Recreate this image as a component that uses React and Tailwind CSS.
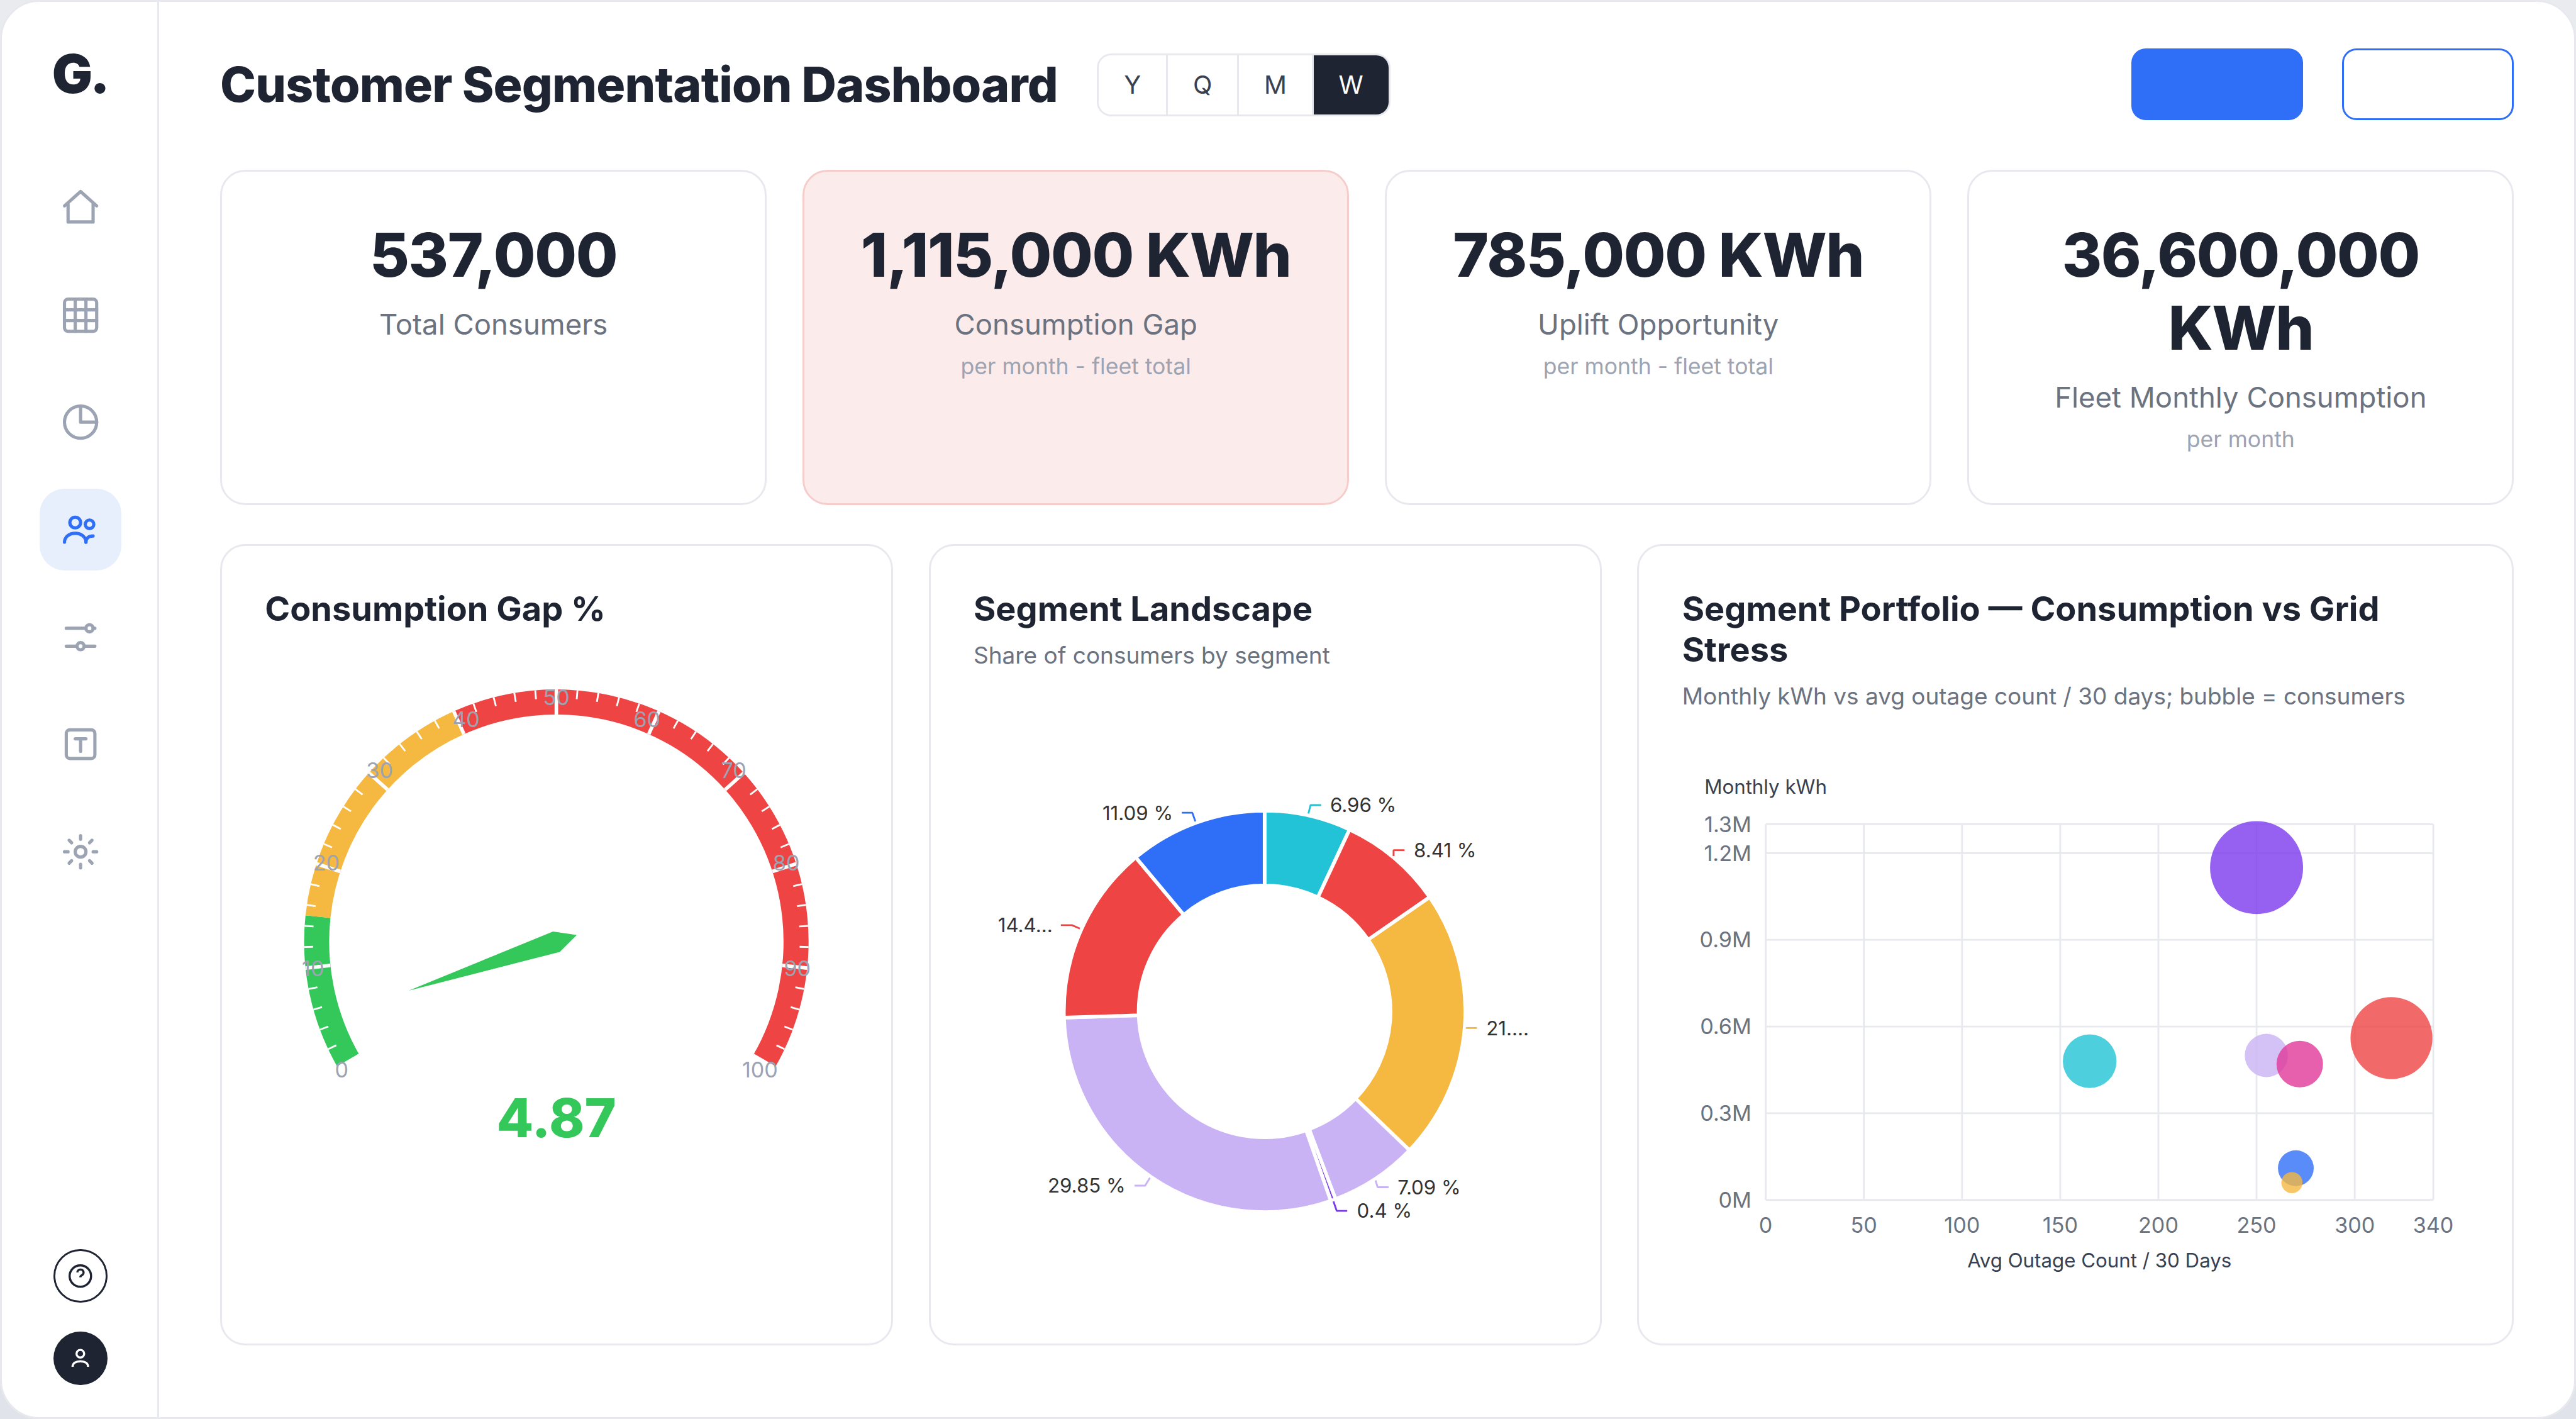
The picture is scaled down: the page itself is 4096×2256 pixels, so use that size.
const navItems = [
  { id: 'home', paths: ['M3 11l9-8 9 8', 'M5 10v10h14V10'] },
  { id: 'grid', rect: 3, paths: ['M3 9h18M3 15h18M9 3v18M15 3v18'] },
  { id: 'reports', circles: [[12, 12, 9]], paths: ['M12 3v9h9'] },
  {
    id: 'segments',
    active: true,
    circles: [[9, 8, 3], [17, 9, 2.4]],
    paths: ['M3 19c0-3 2.7-5 6-5s6 2 6 5', 'M15 19c0-2.2 1.5-3.5 4-3.5'],
  },
  { id: 'filters', circles: [[17, 7, 2], [12, 17, 2]], paths: ['M4 7h11M19 7h1M4 17h6M14 17h6'] },
  { id: 'text', rect: 4, paths: ['M9 9h6M12 9v7'] },
  {
    id: 'settings',
    circles: [[12, 12, 3]],
    paths: ['M12 3v2M12 19v2M3 12h2M19 12h2M5.6 5.6L7 7M17 17l1.4 1.4M18.4 5.6L17 7M7 17l-1.4 1.4'],
  },
];

const kpis = [
  { value: '537,000', label: 'Total Consumers' },
  { value: '1,115,000 KWh', label: 'Consumption Gap', note: 'per month - fleet total', alert: true },
  { value: '785,000 KWh', label: 'Uplift Opportunity', note: 'per month - fleet total' },
  { value: '36,600,000 KWh', label: 'Fleet Monthly Consumption', note: 'per month' },
];

const segments = [
  { pct: 6.96, color: '#22c3d6', label: '6.96 %', x: 199.3, y: 70.3, line: '187.2,75 188.4,70.3 194.3,70.3' },
  { pct: 8.41, color: '#ef4444', label: '8.41 %', x: 246.1, y: 95.5, line: '234.8,98.8 234.8,95.5 240.9,95.5' },
  { pct: 21.79, color: '#f5b841', label: '21....', x: 286.6, y: 195, line: '275.2,194.9 281.4,194.9' },
  { pct: 7.09, color: '#c9b3f5', label: '7.09 %', x: 237, y: 283.9, line: '224.7,280.1 225.9,283.9 232,283.9' },
  { pct: 0.4, color: '#7c3aed', label: '0.4 %', x: 214.3, y: 297.1, line: '201.2,291.8 203,297.1 208.9,297.1' },
  { pct: 29.85, color: '#c9b3f5', label: '29.85 %', x: 85, y: 283, end: true, line: '90,283 95.9,283 98.6,278.6' },
  { pct: 14.41, color: '#ef4444', label: '14.4...', x: 44.2, y: 137.5, end: true, line: '48.8,137.4 55,137.4 59.4,139.3' },
  { pct: 11.09, color: '#2f6ef7', label: '11.09 %', x: 111.5, y: 74.7, end: true, line: '116.4,74.6 122.3,74.6 124,79.4' },
];

const bubbles = [
  { x: 250, y: 1.15, r: 26, color: '#7c3aed' },
  { x: 318.7, y: 0.56, r: 22.9, color: '#ef4444' },
  { x: 165, y: 0.48, r: 15, color: '#22c3d6' },
  { x: 255, y: 0.5, r: 12.1, color: '#c9b3f5' },
  { x: 272, y: 0.47, r: 13, color: '#e0389a' },
  { x: 270, y: 0.11, r: 10, color: '#2f6ef7' },
  { x: 268, y: 0.06, r: 5.9, color: '#f5b841' },
];

// Point on a circle, angle in degrees counter-clockwise from 3 o'clock
const polar = (cx, cy, r, deg) => {
  const rad = (deg * Math.PI) / 180;
  return [cx + r * Math.cos(rad), cy - r * Math.sin(rad)];
};

// Ring slice running clockwise from one angle to another
const ring = (cx, cy, outer, inner, from, to) => {
  const large = from - to > 180 ? 1 : 0;
  const a = polar(cx, cy, outer, from);
  const b = polar(cx, cy, outer, to);
  const c = polar(cx, cy, inner, to);
  const d = polar(cx, cy, inner, from);
  return `M${a}A${outer} ${outer} 0 ${large} 1 ${b}L${c}A${inner} ${inner} 0 ${large} 0 ${d}Z`;
};

const NavIcon = ({ item }) => (
  <svg
    viewBox="0 0 24 24"
    className="size-6"
    fill="none"
    stroke="currentColor"
    strokeWidth="1.8"
    strokeLinecap="round"
    strokeLinejoin="round"
  >
    {item.rect && <rect x={item.rect} y={item.rect} width={24 - item.rect * 2} height={24 - item.rect * 2} rx="2" />}
    {item.circles?.map(([cx, cy, r]) => <circle key={cx} cx={cx} cy={cy} r={r} />)}
    {item.paths.map((d) => <path key={d} d={d} />)}
  </svg>
);

const Sidebar = () => (
  <aside className="flex w-[88px] shrink-0 flex-col items-center border-r-[1.06px] border-[#e8e9ee] pb-[18px]">
    <div className="mt-[22px] h-[36px] text-[30px] leading-[36px] font-black tracking-[-1.5px]">G.</div>
    <nav className="mt-[34px] flex flex-col gap-3.5 pl-px">
      {navItems.map((item) => (
        <button
          key={item.id}
          aria-label={item.id}
          className={`flex size-[46px] items-center justify-center rounded-[14px] ${
            item.active ? 'bg-[#e7effd] text-[#2f6ef7]' : 'text-[#9ca3b2]'
          }`}
        >
          <NavIcon item={item} />
        </button>
      ))}
    </nav>
    <div className="mt-auto flex flex-col gap-4 pl-px">
      <button
        aria-label="help"
        className="flex size-[30px] items-center justify-center rounded-full border-[1.06px] border-[#1f2433]"
      >
        <svg viewBox="0 0 24 24" className="size-4" fill="none" stroke="currentColor" strokeWidth="1.8">
          <circle cx="12" cy="12" r="9" />
          <path d="M9.5 9a2.6 2.5 0 1 1 3.7 2.3c-.8.4-1.2.9-1.2 1.7M12 17h.01" />
        </svg>
      </button>
      <button aria-label="account" className="flex size-[30px] items-center justify-center rounded-full bg-[#1f2433] text-white">
        <svg viewBox="0 0 24 24" className="size-4" fill="none" stroke="currentColor" strokeWidth="1.8">
          <circle cx="12" cy="8" r="3.2" />
          <path d="M5.5 19c0-3 2.7-4.6 6.5-4.6s6.5 1.6 6.5 4.6" />
        </svg>
      </button>
    </div>
  </aside>
);

const Header = () => (
  <header className="flex h-10 items-center">
    <h1 className="mt-px text-[27px] leading-[34px] font-extrabold tracking-[-0.3px] whitespace-nowrap">
      Customer Segmentation Dashboard
    </h1>
    <div className="mt-px ml-[22px] flex h-[35px] overflow-hidden rounded-[8px] border-[1.06px] border-[#e8e9ee] text-[14px] text-[#374151]">
      {['Y', 'Q', 'M', 'W'].map((period) => (
        <button
          key={period}
          className={`px-3.5 ${
            period === 'W' ? 'bg-[#1f2433] text-white' : 'border-r-[1.06px] border-[#e8e9ee]'
          }`}
        >
          {period}
        </button>
      ))}
    </div>
    <div className="ml-auto flex gap-[22px]">
      <button aria-label="primary action" className="h-10 w-24 rounded-[8px] bg-[#2f6ef7]" />
      <button aria-label="secondary action" className="h-10 w-24 rounded-[8px] border-[1.06px] border-[#2f6ef7] bg-white" />
    </div>
  </header>
);

const KpiCard = ({ kpi }) => (
  <div
    className={`rounded-[14px] border-[1.06px] p-[26px] text-center ${
      kpi.alert ? 'border-[#f6cccc] bg-[#fcebeb]' : 'border-[#e8e9ee] bg-white'
    }`}
  >
    <div className="text-[34px] leading-[1.2] font-extrabold tracking-[-0.5px]">{kpi.value}</div>
    <div className="mt-[6.4px] text-[16px] leading-6 text-[#6b7280]">{kpi.label}</div>
    {kpi.note && <div className="mt-0.5 text-[12.5px] leading-[19px] text-[#9ca3b2]">{kpi.note}</div>}
  </div>
);

const ChartCard = ({ title, subtitle, children }) => (
  <section className="rounded-[14px] border-[1.06px] border-[#e8e9ee] bg-white px-6 pt-[23.5px] pb-6">
    <h2 className="text-[19px] leading-[23px] font-bold">{title}</h2>
    {subtitle && <p className="mt-[4.8px] text-[13px] leading-[19.5px] text-[#6b7280]">{subtitle}</p>}
    {children}
  </section>
);

const Gauge = () => {
  const cx = 163;
  const cy = 166;
  const r = 141;
  const value = 4.87;
  const toAngle = (v) => 210 - v * 2.4;
  const angle = toAngle(value);
  const needle = [
    polar(cx, cy, 12, angle + 180),
    polar(cx, cy, 6, angle + 90),
    polar(cx, cy, 87, angle),
    polar(cx, cy, 6, angle - 90),
  ];
  const bands = [
    [0, 15, '#34c759'],
    [15, 40, '#f5b841'],
    [40, 100, '#ef4444'],
  ];

  return (
    <svg viewBox="0 0 326 340" className="mt-[8.5px] h-[340px] w-[326px] overflow-visible">
      {bands.map(([from, to, color]) => (
        <path key={color} d={ring(cx, cy, r, r - 14, toAngle(from), toAngle(to))} fill={color} />
      ))}
      {/* Ticks */}
      {Array.from({ length: 51 }, (_, i) => {
        const major = i % 5 === 0;
        const [x1, y1] = polar(cx, cy, r, toAngle(i * 2));
        const [x2, y2] = polar(cx, cy, r - (major ? 14 : 5), toAngle(i * 2));
        return <line key={i} x1={x1} y1={y1} x2={x2} y2={y2} stroke="#fff" strokeWidth={major ? 2 : 1} />;
      })}
      {/* Scale labels */}
      {Array.from({ length: 11 }, (_, i) => {
        const [x, y] = polar(cx, cy, 143, toAngle(i * 10));
        const ux = (x - cx) / 143;
        const uy = (y - cy) / 143;
        const anchor = ux < -0.4 ? 'start' : ux > 0.4 ? 'end' : 'middle';
        return (
          <text key={i} x={x} y={y + (uy < -0.8 ? 10.6 : 4.3)} textAnchor={anchor} fontSize="12" fill="#9ca3b2">
            {i * 10}
          </text>
        );
      })}
      <polygon points={needle.join(' ')} fill="#34c759" />
      <text x={cx} y="275.3" textAnchor="middle" fontSize="30" fontWeight="800" fill="#34c759">
        {value}
      </text>
    </svg>
  );
};

const Donut = () => {
  let start = 90;
  const slices = segments.map((s) => {
    const from = start;
    start -= s.pct * 3.6;
    return { ...s, from, to: start };
  });

  return (
    <svg viewBox="0 0 326 340" className="mt-[3.7px] h-[340px] w-[326px] overflow-visible">
      {slices.map((s) => (
        <path
          key={s.label}
          d={ring(162.7, 185.6, 112.2, 70.4, s.from, s.to)}
          fill={s.color}
          stroke="#fff"
          strokeWidth="2"
          strokeLinejoin="bevel"
        />
      ))}
      {slices.map((s) => (
        <g key={s.label}>
          <polyline points={s.line} fill="none" stroke={s.color} strokeLinejoin="bevel" />
          <text x={s.x} y={s.y + 4} textAnchor={s.end ? 'end' : 'start'} fontSize="11" fill="#333">
            {s.label}
          </text>
        </g>
      ))}
    </svg>
  );
};

const BubbleChart = () => {
  const left = 46.6;
  const top = 57.8;
  const width = 373.2;
  const height = 210;
  const px = (x) => left + (x / 340) * width;
  const py = (y) => top + height - (y / 1.3) * height;
  const xTicks = [0, 50, 100, 150, 200, 250, 300, 340];
  const yTicks = [0, 0.3, 0.6, 0.9, 1.2, 1.3];

  return (
    <svg viewBox="0 0 440 320" className="mt-1 h-[320px] w-[440px] overflow-visible">
      {xTicks.map((x) => (
        <g key={x}>
          <line x1={px(x)} x2={px(x)} y1={top} y2={top + height} stroke="#e8e9ee" />
          <text x={px(x)} y={top + height + 18.4} textAnchor="middle" fontSize="12" fill="#6b7280">
            {x}
          </text>
        </g>
      ))}
      {yTicks.map((y) => (
        <g key={y}>
          <line x1={left} x2={left + width} y1={py(y)} y2={py(y)} stroke="#e8e9ee" />
          <text x={left - 8} y={py(y) + 4.3} textAnchor="end" fontSize="12" fill="#6b7280">
            {y}M
          </text>
        </g>
      ))}
      <text x={left} y="40.8" textAnchor="middle" fontSize="11" fill="#374151">
        Monthly kWh
      </text>
      <text x={left + width / 2} y="305.4" textAnchor="middle" fontSize="11" fill="#374151">
        Avg Outage Count / 30 Days
      </text>
      {bubbles.map((b) => (
        <circle key={b.x} cx={px(b.x)} cy={py(b.y)} r={b.r} fill={b.color} opacity="0.8" />
      ))}
    </svg>
  );
};

const App = () => (
  <div className="h-[793.2px] w-[1440px] overflow-hidden bg-linear-to-b from-[#e9ebef] to-[#e0e3e9] font-['Inter',sans-serif] text-[#1f2433] [zoom:2.84444]">
    <div className="flex h-full overflow-hidden rounded-[22px] border-[1.06px] border-[#e8e9ee] bg-white">
      <Sidebar />
      <main className="flex flex-1 flex-col px-[34px] pt-[26px] pb-10">
        <Header />
        <div className="mt-7 grid grid-cols-4 gap-5">
          {kpis.map((kpi) => (
            <KpiCard key={kpi.label} kpi={kpi} />
          ))}
        </div>
        <div className="mt-[22px] grid flex-1 grid-cols-[1fr_1fr_1.3fr] gap-5">
          <ChartCard title="Consumption Gap %">
            <Gauge />
          </ChartCard>
          <ChartCard title="Segment Landscape" subtitle="Share of consumers by segment">
            <Donut />
          </ChartCard>
          <ChartCard
            title="Segment Portfolio — Consumption vs Grid Stress"
            subtitle="Monthly kWh vs avg outage count / 30 days; bubble = consumers"
          >
            <BubbleChart />
          </ChartCard>
        </div>
      </main>
    </div>
  </div>
);

export default App;
